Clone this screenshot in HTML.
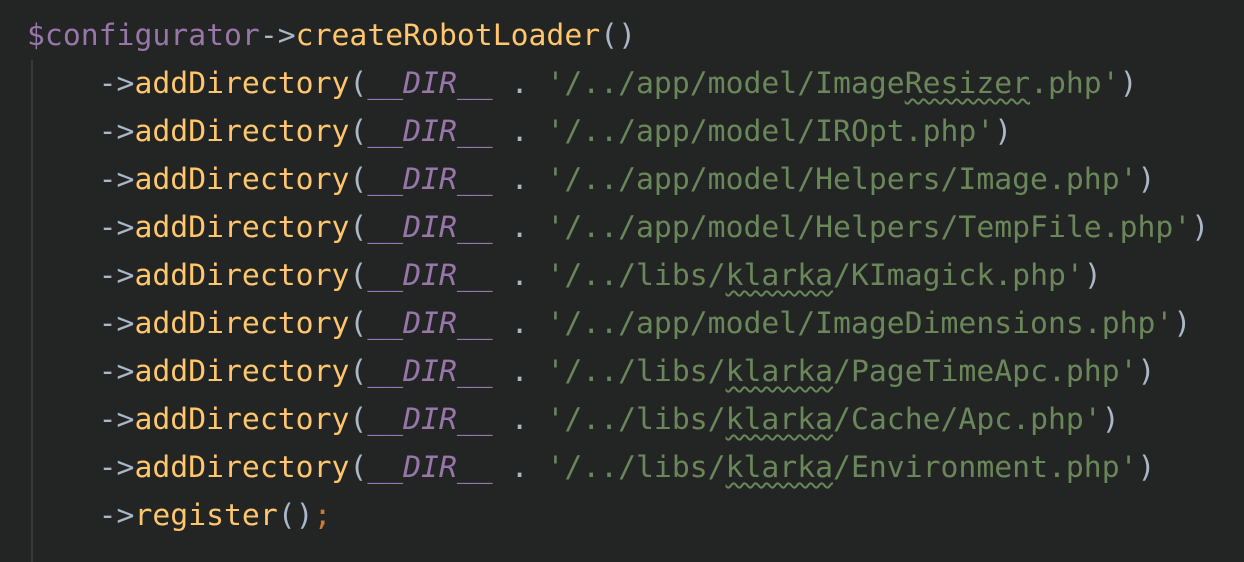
<!DOCTYPE html>
<html><head><meta charset="utf-8"><style>
html,body{margin:0;padding:0;background:#232525;width:1244px;height:562px;overflow:hidden}
pre{margin:0;position:absolute;left:27px;top:12px;font-family:"DejaVu Sans Mono","Liberation Mono",monospace;font-size:29.75px;line-height:48px;color:#a9b7c6}
.guide{position:absolute;left:31px;top:60px;width:2px;height:502px;background:#373939}
.v{color:#9876aa}.f{color:#ffc66d}.s{color:#6a8759}.o{color:#cc7832}
.d{color:#9876aa;font-style:italic}
.w{text-decoration:underline wavy #6a8759;text-decoration-thickness:1.5px;text-underline-offset:5px}
</style></head><body>
<div class="guide"></div>
<pre><span class="v">$configurator</span>-&gt;<span class="f">createRobotLoader</span>()
    -&gt;<span class="f">addDirectory</span>(<span class="d">__DIR__</span> . <span class="s">'/../app/model/Image<span class="w">Resizer</span>.php'</span>)
    -&gt;<span class="f">addDirectory</span>(<span class="d">__DIR__</span> . <span class="s">'/../app/model/IROpt.php'</span>)
    -&gt;<span class="f">addDirectory</span>(<span class="d">__DIR__</span> . <span class="s">'/../app/model/Helpers/Image.php'</span>)
    -&gt;<span class="f">addDirectory</span>(<span class="d">__DIR__</span> . <span class="s">'/../app/model/Helpers/TempFile.php'</span>)
    -&gt;<span class="f">addDirectory</span>(<span class="d">__DIR__</span> . <span class="s">'/../libs/<span class="w">klarka</span>/KImagick.php'</span>)
    -&gt;<span class="f">addDirectory</span>(<span class="d">__DIR__</span> . <span class="s">'/../app/model/ImageDimensions.php'</span>)
    -&gt;<span class="f">addDirectory</span>(<span class="d">__DIR__</span> . <span class="s">'/../libs/<span class="w">klarka</span>/PageTimeApc.php'</span>)
    -&gt;<span class="f">addDirectory</span>(<span class="d">__DIR__</span> . <span class="s">'/../libs/<span class="w">klarka</span>/Cache/Apc.php'</span>)
    -&gt;<span class="f">addDirectory</span>(<span class="d">__DIR__</span> . <span class="s">'/../libs/<span class="w">klarka</span>/Environment.php'</span>)
    -&gt;<span class="f">register</span>()<span class="o">;</span></pre>
</body></html>
